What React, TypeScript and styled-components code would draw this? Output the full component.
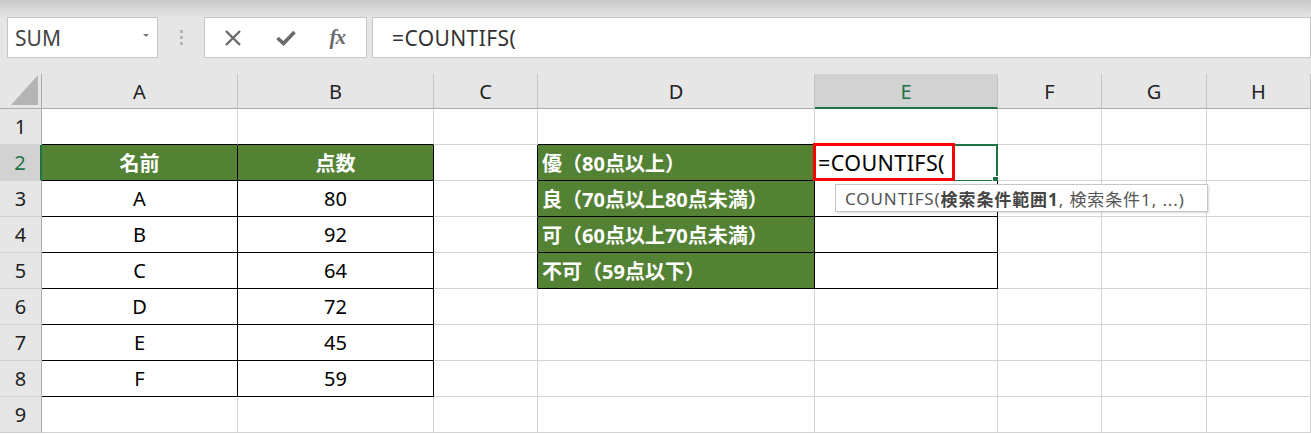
import { Fragment } from "react";
import styled, { createGlobalStyle } from "styled-components";

const GlobalStyle = createGlobalStyle`
  body {
    margin: 0;
    background: #ffffff;
    font-family: "Noto Sans", "Noto Sans CJK JP", sans-serif;
  }
  * { box-sizing: border-box; }
`;

const GREEN = "#548235";
const EXCEL_GREEN = "#217346";
const GRID = "#d4d4d4";

const COLS = [
  { name: "A", w: 196 },
  { name: "B", w: 196 },
  { name: "C", w: 104 },
  { name: "D", w: 277 },
  { name: "E", w: 183 },
  { name: "F", w: 104 },
  { name: "G", w: 105 },
  { name: "H", w: 104 },
];

const ROWS = [1, 2, 3, 4, 5, 6, 7, 8, 9];

const values: Record<string, string> = {
  A2: "名前",
  B2: "点数",
  A3: "A",
  B3: "80",
  A4: "B",
  B4: "92",
  A5: "C",
  B5: "64",
  A6: "D",
  B6: "72",
  A7: "E",
  B7: "45",
  A8: "F",
  B8: "59",
  D2: "優（80点以上）",
  D3: "良（70点以上80点未満）",
  D4: "可（60点以上70点未満）",
  D5: "不可（59点以下）",
  E2: "=COUNTIFS(",
};

// two bordered tables: A2:B8 and D2:E5
const inTable = (c: number, r: number) =>
  (c >= 0 && c <= 1 && r >= 2 && r <= 8) || (c >= 3 && c <= 4 && r >= 2 && r <= 5);

const isFilled = (c: number, r: number) =>
  (r === 2 && c <= 1) || (c === 3 && r >= 2 && r <= 5);

const Page = styled.div`
  width: 1311px;
  background: #e6e6e6;
  overflow: hidden;
`;

const TopBand = styled.div`
  height: 17px;
  background: linear-gradient(#c9c9c9, #dcdcdc 70%, #e3e3e3);
`;

const FormulaBar = styled.div`
  display: flex;
  align-items: stretch;
  height: 41px;
  margin-bottom: 16px;
  padding-left: 7px;
`;

const Box = styled.div<{ $w?: number }>`
  display: flex;
  align-items: center;
  width: ${(p) => (p.$w ? `${p.$w}px` : "auto")};
  flex: ${(p) => (p.$w ? "none" : "1")};
  background: #ffffff;
  border: 1px solid #c6c6c6;
`;

const NameBox = styled(Box)`
  justify-content: space-between;
  padding: 0 8px 0 7px;
  font-size: 21px;
  color: #444;
`;

const Caret = styled.span`
  width: 0;
  height: 0;
  border-left: 3px solid transparent;
  border-right: 3px solid transparent;
  border-top: 3px solid #7a7a7a;
  margin-top: -4px;
`;

const Grip = styled.div`
  width: 46px;
  display: flex;
  flex-direction: column;
  align-items: center;
  justify-content: center;
  gap: 3px;

  span {
    width: 3px;
    height: 3px;
    background: #b5b5b5;
  }
`;

const IconBox = styled(Box)`
  justify-content: space-around;
  padding: 0 4px 0 2px;
  margin-right: 5px;
`;

const Fx = styled.span`
  font-family: "Liberation Serif", "DejaVu Serif", serif;
  font-style: italic;
  font-weight: bold;
  font-size: 21px;
  color: #6a6a6a;
  letter-spacing: -1px;
`;

const FormulaInput = styled(Box)`
  padding-left: 19px;
  font-size: 21px;
  letter-spacing: 0.4px;
  color: #333;
`;

const Sheet = styled.div`
  display: grid;
  grid-template-columns: 42px ${COLS.map((c) => `${c.w}px`).join(" ")};
  grid-template-rows: 35px repeat(9, 36px);
  background: #ffffff;
`;

const Corner = styled.div`
  position: relative;
  background: #e6e6e6;
  border-right: 1px solid #ababab;
  border-bottom: 1px solid #ababab;

  &::after {
    content: "";
    position: absolute;
    right: 3px;
    bottom: 3px;
    width: 0;
    height: 0;
    border-left: 27px solid transparent;
    border-bottom: 30px solid #b4b4b4;
  }
`;

const ColHead = styled.div<{ $active?: boolean }>`
  display: flex;
  align-items: center;
  justify-content: center;
  font-size: 20px;
  color: ${(p) => (p.$active ? EXCEL_GREEN : "#222")};
  background: ${(p) => (p.$active ? "#d2d2d2" : "#e6e6e6")};
  border-right: 1px solid #c4c4c4;
  border-bottom: ${(p) => (p.$active ? `2px solid ${EXCEL_GREEN}` : "1px solid #ababab")};
  padding-top: 1px;
`;

const RowHead = styled.div<{ $active?: boolean }>`
  display: flex;
  align-items: center;
  justify-content: center;
  font-size: 20px;
  color: ${(p) => (p.$active ? EXCEL_GREEN : "#222")};
  background: ${(p) => (p.$active ? "#d2d2d2" : "#e6e6e6")};
  border-right: ${(p) => (p.$active ? `2px solid ${EXCEL_GREEN}` : "1px solid #ababab")};
  border-bottom: 1px solid #d0d0d0;
`;

const Cell = styled.div<{
  $fill?: boolean;
  $align: "left" | "center";
  $darkRight?: boolean;
  $darkBottom?: boolean;
}>`
  position: relative;
  display: flex;
  align-items: center;
  justify-content: ${(p) => (p.$align === "center" ? "center" : "flex-start")};
  padding-left: ${(p) => (p.$align === "left" ? "4px" : "0")};
  font-size: 20px;
  white-space: nowrap;
  color: ${(p) => (p.$fill ? "#ffffff" : "#000000")};
  font-weight: ${(p) => (p.$fill ? 700 : 400)};
  background: ${(p) => (p.$fill ? GREEN : "#ffffff")};
  border-right: 1px solid ${(p) => (p.$darkRight ? "#000" : GRID)};
  border-bottom: 1px solid ${(p) => (p.$darkBottom ? "#000" : GRID)};
`;

const EditText = styled.span`
  font-size: 21.5px;
  letter-spacing: 0.4px;
  margin-left: -1px;
`;

const ActiveFrame = styled.div`
  position: absolute;
  left: -1px;
  top: -1px;
  right: -1px;
  bottom: -2px;
  border: 2px solid ${EXCEL_GREEN};
  pointer-events: none;

  &::after {
    content: "";
    position: absolute;
    right: -4px;
    bottom: -4px;
    width: 6px;
    height: 6px;
    background: ${EXCEL_GREEN};
    border: 1px solid #ffffff;
  }
`;

const Highlight = styled.div`
  position: absolute;
  left: -2px;
  top: -2px;
  width: 142px;
  height: 38px;
  border: 3px solid #ff0000;
  z-index: 2;
`;

const Tooltip = styled.div`
  position: absolute;
  left: 20px;
  top: 39px;
  width: 373px;
  height: 28px;
  display: flex;
  align-items: center;
  padding-left: 9px;
  background: #ffffff;
  border: 1px solid #c6c6c6;
  box-shadow: 1px 1px 2px rgba(0, 0, 0, 0.15);
  font-size: 17px;
  letter-spacing: 0.9px;
  font-weight: 400;
  color: #555;
  z-index: 3;

  b {
    font-weight: 700;
    color: #444;
  }
`;

function CrossIcon() {
  return (
    <svg width="18" height="16" viewBox="0 0 18 16">
      <path d="M2 1 L16 15 M16 1 L2 15" stroke="#6a6a6a" strokeWidth="2.4" fill="none" />
    </svg>
  );
}

function CheckIcon() {
  return (
    <svg width="20" height="16" viewBox="0 0 20 16">
      <path d="M1.5 8 L7.5 13.5 L18.5 2" stroke="#6a6a6a" strokeWidth="3.6" fill="none" />
    </svg>
  );
}

function App() {
  return (
    <>
      <GlobalStyle />
      <Page>
        <TopBand />
        <FormulaBar>
          <NameBox $w={151}>
            <span>SUM</span>
            <Caret />
          </NameBox>
          <Grip>
            <span />
            <span />
            <span />
          </Grip>
          <IconBox $w={163}>
            <CrossIcon />
            <CheckIcon />
            <Fx>fx</Fx>
          </IconBox>
          <FormulaInput>=COUNTIFS(</FormulaInput>
        </FormulaBar>

        <Sheet>
          <Corner />
          {COLS.map((col) => (
            <ColHead key={col.name} $active={col.name === "E"}>
              {col.name}
            </ColHead>
          ))}

          {ROWS.map((r) => (
            <Fragment key={r}>
              <RowHead $active={r === 2}>{r}</RowHead>
              {COLS.map((col, c) => {
                const id = `${col.name}${r}`;
                const text = values[id];
                const editing = id === "E2";
                return (
                  <Cell
                    key={id}
                    $fill={isFilled(c, r)}
                    $align={c <= 1 ? "center" : "left"}
                    $darkRight={inTable(c, r) || inTable(c + 1, r)}
                    $darkBottom={inTable(c, r) || inTable(c, r + 1)}
                  >
                    {editing ? (
                      <>
                        <EditText>{text}</EditText>
                        <ActiveFrame />
                        <Highlight />
                        <Tooltip>
                          COUNTIFS(<b>検索条件範囲1</b>, 検索条件1, ...)
                        </Tooltip>
                      </>
                    ) : (
                      text
                    )}
                  </Cell>
                );
              })}
            </Fragment>
          ))}
        </Sheet>
      </Page>
    </>
  );
}

export default App;
